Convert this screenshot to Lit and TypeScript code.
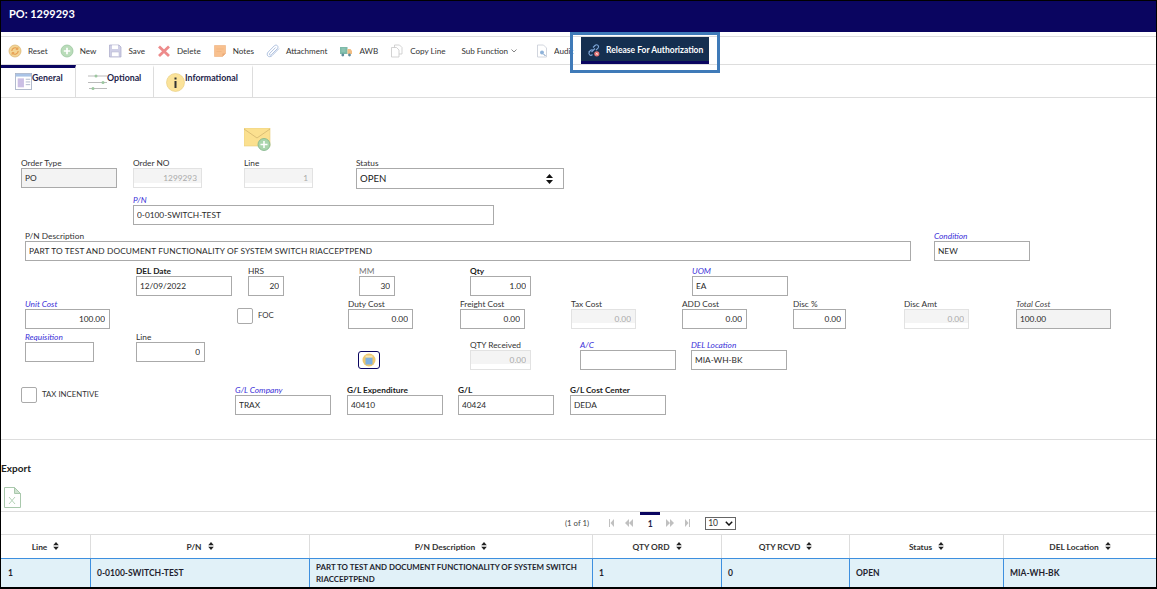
import { LitElement, html, css, svg } from 'lit';
import { customElement } from 'lit/decorators.js';

type Kind = 'plain' | 'bold' | 'link' | 'dim' | 'total';
interface Field {
  x: number;
  w: number;
  label?: string;
  kind?: Kind;
  value?: string;
  right?: boolean;
  disabled?: boolean;
  grey?: boolean;
  wide?: boolean;
  dy?: number;
  custom?: 'select' | 'check' | 'calc';
  text?: string;
}
interface Row {
  gap: number;
  fields: Field[];
}

const ROWS: Row[] = [
  { gap: 9, fields: [
    { x: 21, w: 96, label: 'Order Type', value: 'PO', grey: true },
    { x: 133, w: 69, label: 'Order NO', value: '1299293', right: true, disabled: true },
    { x: 244, w: 69, label: 'Line', value: '1', right: true, disabled: true },
    { x: 356, w: 208, label: 'Status', custom: 'select', value: 'OPEN' },
  ] },
  { gap: 7, fields: [
    { x: 133, w: 361, label: 'P/N', kind: 'link', value: '0-0100-SWITCH-TEST' },
  ] },
  { gap: 7, fields: [
    { x: 25, w: 886, label: 'P/N Description', wide: true, value: 'PART TO TEST AND DOCUMENT FUNCTIONALITY OF SYSTEM SWITCH RIACCEPTPEND' },
    { x: 934, w: 96, label: 'Condition', kind: 'link', value: 'NEW' },
  ] },
  { gap: 6, fields: [
    { x: 136, w: 96, label: 'DEL Date', kind: 'bold', value: '12/09/2022' },
    { x: 248, w: 36, label: 'HRS', value: '20', right: true },
    { x: 359, w: 36, label: 'MM', kind: 'dim', value: '30', right: true },
    { x: 470, w: 61, label: 'Qty', kind: 'bold', value: '1.00', right: true },
    { x: 692, w: 96, label: 'UOM', kind: 'link', value: 'EA' },
  ] },
  { gap: 4, fields: [
    { x: 25, w: 85, label: 'Unit Cost', kind: 'link', value: '100.00', right: true },
    { x: 237, w: 60, custom: 'check', text: 'FOC', dy: 8 },
    { x: 348, w: 65, label: 'Duty Cost', value: '0.00', right: true },
    { x: 460, w: 65, label: 'Freight Cost', value: '0.00', right: true },
    { x: 571, w: 65, label: 'Tax Cost', value: '0.00', right: true, disabled: true },
    { x: 682, w: 65, label: 'ADD Cost', value: '0.00', right: true },
    { x: 793, w: 53, label: 'Disc %', value: '0.00', right: true },
    { x: 904, w: 65, label: 'Disc Amt', value: '0.00', right: true, disabled: true },
    { x: 1016, w: 95, label: 'Total Cost', kind: 'total', value: '100.00', grey: true },
  ] },
  { gap: 4, fields: [
    { x: 25, w: 69, label: 'Requisition', kind: 'link', value: '' },
    { x: 136, w: 69, label: 'Line', value: '0', right: true },
    { x: 358, w: 22, custom: 'calc', dy: 18 },
    { x: 470, w: 61, label: 'QTY Received', value: '0.00', right: true, disabled: true, dy: 8 },
    { x: 580, w: 96, label: 'A/C', kind: 'link', value: '', dy: 8 },
    { x: 691, w: 96, label: 'DEL Location', kind: 'link', value: 'MIA-WH-BK', dy: 8 },
  ] },
  { gap: 16, fields: [
    { x: 21, w: 110, custom: 'check', text: 'TAX INCENTIVE', dy: 1 },
    { x: 235, w: 96, label: 'G/L Company', kind: 'link', value: 'TRAX' },
    { x: 347, w: 96, label: 'G/L Expenditure', kind: 'bold', value: '40410' },
    { x: 458, w: 96, label: 'G/L', kind: 'bold', value: '40424' },
    { x: 570, w: 96, label: 'G/L Cost Center', kind: 'bold', value: 'DEDA' },
  ] },
];

const COLUMNS = [
  { name: 'Line', w: 90, value: '1' },
  { name: 'P/N', w: 219, value: '0-0100-SWITCH-TEST' },
  { name: 'P/N Description', w: 283, value: 'PART TO TEST AND DOCUMENT FUNCTIONALITY OF SYSTEM SWITCH RIACCEPTPEND', tight: true },
  { name: 'QTY ORD', w: 129, value: '1' },
  { name: 'QTY RCVD', w: 128, value: '0' },
  { name: 'Status', w: 154, value: 'OPEN' },
  { name: 'DEL Location', w: 152, value: 'MIA-WH-BK' },
];

const ic = (body: unknown) => html`<svg class="ic" width="14" height="14" viewBox="0 0 14 14">${body}</svg>`;

const ICONS: Record<string, unknown> = {
  reset: ic(svg`<circle cx="7" cy="7" r="6" fill="#f3d595" stroke="#dcb877" stroke-width=".8"/>
    <path d="M3.8 7a3.2 3.2 0 0 1 5.6-2.1M10.2 7a3.2 3.2 0 0 1-5.6 2.1" fill="none" stroke="#e59a4c" stroke-width="1.1"/>
    <path d="M9.9 3.2v2.2H7.8M4.1 10.8V8.6h2.1" fill="none" stroke="#e59a4c" stroke-width=".9"/>`),
  new: ic(svg`<circle cx="7" cy="7" r="6" fill="#b9dcb9" stroke="#9cc79f" stroke-width=".8"/>
    <path d="M7 3.8v6.4M3.8 7h6.4" stroke="#fff" stroke-width="1.7"/>`),
  save: ic(svg`<path d="M1.5 1H11l2 2v10H1.5z" fill="#cfcfe6" stroke="#a9a9c8" stroke-width=".7"/>
    <rect x="4" y="1.3" width="6" height="3.7" fill="#fff"/>
    <rect x="3.5" y="8" width="7.5" height="4.7" fill="#fff" stroke="#b4b4d0" stroke-width=".5"/>`),
  delete: ic(svg`<path d="M2 2.5L12 12M12 2.5L2 12" stroke="#ed8b8b" stroke-width="2.8"/>`),
  notes: ic(svg`<path d="M1.5 1.5h11v8l-3 3h-8z" fill="#f8c08e" stroke="#efb07c" stroke-width=".6"/>
    <path d="M12.5 9.5h-3v3z" fill="#e9a877"/>
    <path d="M3.5 5h7M3.500 7.5h5" stroke="#efb07c" stroke-width=".6"/>`),
  attach: ic(svg`<path d="M13 4.500L6 11.700c-1.300 1.300-3.200 1.300-4.100.3-1-1-1-2.700.3-4L8.300 1.800c.9-.9 2.300-.9 3.100-.1.8.8.8 2.100-.1 3L5.300 10.800c-.5.5-1.200.5-1.600.1-.4-.4-.4-1.100.1-1.600L9.600 3.500" fill="none" stroke="#a8bcdc" stroke-width=".9"/>`),
  awb: ic(svg`<rect x="1" y="3" width="7.5" height="7" fill="#7dbaa8"/>
    <path d="M8.500 5h3L13 7v3H8.500z" fill="#f2bd83"/>
    <path d="M2.500 5h4M2.500 7h4" stroke="#a9d6c8" stroke-width=".7"/>
    <circle cx="3.8" cy="11" r="1.4" fill="#5f8a99"/><circle cx="10.500" cy="11" r="1.4" fill="#5f8a99"/>`),
  copy: ic(svg`<path d="M4.500 1h5L12 3.500V10H4.500z" fill="#fff" stroke="#c8c8c8" stroke-width=".8"/>
    <path d="M1.500 3.500h5L9 6v7H1.500z" fill="#fff" stroke="#c8c8c8" stroke-width=".8"/>`),
  audit: ic(svg`<path d="M2.500 1h6l3 3v9h-9z" fill="#fff" stroke="#c6ccd6" stroke-width=".8"/>
    <circle cx="7" cy="8.500" r="2" fill="#8fb3da"/><path d="M8.500 10l2 2" stroke="#6f93bc"/>`),
};

const TOOLS = [
  { icon: 'reset', label: 'Reset' },
  { icon: 'new', label: 'New' },
  { icon: 'save', label: 'Save' },
  { icon: 'delete', label: 'Delete' },
  { icon: 'notes', label: 'Notes' },
  { icon: 'attach', label: 'Attachment' },
  { icon: 'awb', label: 'AWB' },
  { icon: 'copy', label: 'Copy Line' },
];

const sortIcon = html`<svg class="sort" width="6" height="8" viewBox="0 0 7 10"><path d="M3.500 0L7 4H0zM0 6h7L3.500 10z" fill="#222"/></svg>`;

@customElement('app-root')
export class AppRoot extends LitElement {
  static styles = css`
    :host {
      display: block;
      width: 1157px;
      height: 589px;
      box-sizing: border-box;
      border: 1px solid #000;
      border-bottom-width: 2px;
      overflow: hidden;
      position: relative;
      background: #fff;
      font-family: Lato, "Liberation Sans", sans-serif;
      font-size: 8.3px;
      color: #222;
    }
    * { box-sizing: border-box; }
    .title {
      height: 31px;
      background: #0a0560;
      color: #fff;
      font-weight: 700;
      font-size: 11px;
      padding: 0 0 7px 8px;
      display: flex;
      align-items: center;
    }
    .toolbar {
      height: 29px;
      margin-top: 4px;
      border-top: 1px solid #ddd;
      border-bottom: 1px solid #ddd;
      padding-left: 7px;
      display: flex;
      align-items: center;
      gap: 12px;
      white-space: nowrap;
      font-size: 8.1px;
      color: #333;
    }
    .tool { display: flex; align-items: center; gap: 6px; }
    .ic { flex: none; display: block; }
    .chev { margin-left: -3px; }
    .sub { margin-left: 4px; }
    .audit { margin-left: 6px; gap: 5px; }
    .audit span { width: 20px; overflow: hidden; }
    .release {
      flex: none;
      width: 128px;
      height: 27px;
      margin-left: -5px;
      align-self: flex-end;
      background: #152f50;
      border-bottom: 3px solid #0a0560;
      color: #fff;
      font-weight: 700;
      font-size: 8.5px;
      display: flex;
      align-items: center;
      gap: 6px;
      padding: 2px 0 0 6px;
    }
    .release svg { flex: none; }
    .highlight {
      position: absolute;
      left: 569px;
      top: 31px;
      width: 150px;
      height: 41px;
      border: 3px solid #3f7ab8;
    }
    .tabs {
      height: 33px;
      border-bottom: 1px solid #ddd;
      display: flex;
      font-weight: 700;
      font-size: 8.8px;
      color: #24244a;
    }
    .tab {
      display: flex;
      padding-top: 4px;
      border-right: 1px solid #ddd;
      border-top: 3px solid transparent;
    }
    .tab svg { margin-top: 1px; }
    .tab.on { border-top-color: #0a0560; }
    .tab-general { width: 75px; padding-left: 14px; }
    .tab-optional { width: 78px; padding-left: 12px; }
    .tab-info { width: 99px; padding-left: 12px; }
    .form { padding-top: 30px; }
    .envelope { margin-left: 243px; height: 22px; }
    .row { display: flex; align-items: flex-start; }
    .field { flex: none; display: flex; flex-direction: column; }
    .label { height: 9px; line-height: 9px; white-space: nowrap; color: #333; }
    .label.bold { font-weight: 700; color: #222; }
    .label.link { font-style: italic; color: #3a2fd8; }
    .label.dim { color: #777; }
    .label.total { font-style: italic; color: #444; }
    input {
      width: 100%;
      height: 20px;
      border: 1px solid #aaa;
      padding: 0 4px 0 3px;
      font: inherit;
      color: #2a2a2a;
      background: #fff;
      outline: none;
    }
    input.right { text-align: right; }
    input.grey { background: #f3f3f3; }
    input.wide { letter-spacing: .12px; }
    input:disabled { border-color: #e2e2e2; color: #aaa; background: linear-gradient(#f4f4f4 75%, #fff 75%); }
    .select {
      height: 21px;
      border: 1px solid #aaa;
      padding: 0 10px 0 3px;
      display: flex;
      align-items: center;
      justify-content: space-between;
      font-size: 9.6px;
      color: #222;
    }
    .check { display: flex; align-items: center; gap: 5px; white-space: nowrap; color: #333; font-size: 7.8px; }
    .check span:last-child { margin-top: -2px; }
    .box { width: 16px; height: 16px; border: 1px solid #aaa; border-radius: 2px; background: #fff; }
    .calc {
      width: 22px;
      height: 18px;
      border: 1px solid #0a0560;
      border-radius: 3px;
      display: flex;
      align-items: center;
      justify-content: center;
    }
    .divider { border-top: 1px solid #ddd; margin-top: 24px; }
    .export { font-weight: 700; font-size: 10px; line-height: 12px; padding-top: 22px; color: #222; }
    .xls { display: block; margin: 13px 0 0 3px; }
    .pager {
      margin-top: 3px;
      height: 23px;
      border-top: 1px solid #ddd;
      display: flex;
      align-items: center;
      padding-left: 564px;
      color: #444;
      font-size: 7.8px;
    }
    .nav { display: flex; align-items: center; gap: 11px; }
    .nav-back { margin: 0 7px 0 20px; }
    .nav-next { margin: 0 15px 0 6px; }
    .current {
      width: 20px;
      height: 22px;
      padding-bottom: 2px;
      display: flex;
      align-items: center;
      justify-content: center;
      font-weight: 700;
      font-size: 8.5px;
      color: #24244a;
      border-top: 3px solid #0a0560;
    }
    .per {
      width: 31px;
      height: 13px;
      border: 1px solid #666;
      display: flex;
      align-items: center;
      justify-content: space-between;
      padding: 0 2px;
      font-size: 8.5px;
      color: #333;
    }
    .grid { display: flex; flex-direction: column; }
    .tr { display: flex; }
    .th {
      height: 24px;
      padding-top: 1px;
      border-top: 1px solid #ddd;
      border-right: 1px solid #ddd;
      display: flex;
      align-items: center;
      justify-content: center;
      gap: 6px;
      font-weight: 700;
      color: #333;
      font-size: 8.4px;
    }
    .th:last-child, .td:last-child { border-right: none; }
    .sort { margin-top: -3px; }
    .td {
      height: 30px;
      background: #e1f1f8;
      border-top: 1px solid #3d8fdf;
      border-bottom: 1px solid #3d8fdf;
      border-right: 1px solid #3d8fdf;
      padding: 0 6px;
      display: flex;
      align-items: center;
      font-weight: 700;
      line-height: 12px;
      color: #1f1f2e;
      font-size: 8.5px;
    }
    .td:first-child { padding-left: 7px; }
    .td.tight { font-size: 7.9px; }
  `;

  private renderField(f: Field, left: number) {
    const gap = f.x - left;
    const place = `margin-left:${gap}px;margin-top:${f.dy ?? 0}px;width:${f.w}px`;
    if (f.custom === 'check') {
      return html`<div class="check" style=${place}><span class="box"></span><span>${f.text}</span></div>`;
    }
    if (f.custom === 'calc') {
      return html`<div class="calc" style=${place}>
        <svg width="14" height="14" viewBox="0 0 14 14">
          <circle cx="7" cy="7" r="6.5" fill="#eec76e"/>
          <rect x="3.5" y="4.5" width="7" height="7" fill="#7fb0e0"/>
          <rect x="3.5" y="2.5" width="7" height="2" fill="#f6e6b4"/>
        </svg>
      </div>`;
    }
    return html`<div class="field" style=${place}>
      <span class="label ${f.kind ?? 'plain'}">${f.label}</span>
      ${f.custom === 'select'
        ? html`<div class="select">${f.value}
            <svg width="7" height="10" viewBox="0 0 7 10"><path d="M3.500 0L7 4H0zM0 6h7L3.500 10z" fill="#111"/></svg>
          </div>`
        : html`<input class="${f.right ? 'right' : ''} ${f.grey ? 'grey' : ''} ${f.wide ? 'wide' : ''}" .value=${f.value ?? ''} ?disabled=${f.disabled} readonly />`}
    </div>`;
  }

  private renderRow(row: Row) {
    // x in the data is page position, the frame border takes 1px
    let left = 1;
    return html`<div class="row" style="margin-top:${row.gap}px">
      ${row.fields.map((f) => {
        const out = this.renderField(f, left);
        left = f.x + f.w;
        return out;
      })}
    </div>`;
  }

  render() {
    return html`
      <div class="title">PO: 1299293</div>
      <div class="toolbar">
        ${TOOLS.map((t) => html`<div class="tool">${ICONS[t.icon]}<span>${t.label}</span></div>`)}
        <div class="tool sub">
          <span>Sub Function</span>
          <svg class="chev" width="6" height="4" viewBox="0 0 6 4"><path d="M.5.5L3 3 5.5.5" fill="none" stroke="#666" stroke-width=".8"/></svg>
        </div>
        <div class="tool audit">${ICONS.audit}<span>Audit</span></div>
        <div class="release">
          <svg width="13" height="14" viewBox="0 0 13 14">
            <path d="M1.500 9.500l2-2c.8-.8 2-.8 2.700-.1M5.500 11.500c-.8.8-2.200.9-3 .1-.7-.7-.7-1.900 0-2.600M6 4.500l2-2c.8-.8 2.200-.8 3-.1.7.8.7 2 0 2.800L9 7.200" fill="none" stroke="#7ea6d8" stroke-width="1.1"/>
            <path d="M4.500 9L8 5.500" stroke="#7ea6d8" stroke-width="1.1"/>
            <circle cx="9.800" cy="10.800" r="2.6" fill="#e57575"/>
            <path d="M8.800 9.800l2 2M10.800 9.800l-2 2" stroke="#fff" stroke-width=".7"/>
          </svg>
          Release For Authorization
        </div>
      </div>
      <div class="highlight"></div>
      <div class="tabs">
        <div class="tab tab-general on">
          <svg width="17" height="17" viewBox="0 0 19 19"><rect x=".5" y=".5" width="18" height="18" fill="#fff" stroke="#aab4c8"/><rect x="1" y="1" width="17" height="3" fill="#a9c3e6"/><rect x="3" y="6" width="7" height="10" fill="#cbbfe4"/><path d="M12 7h5M12 10h5M12 13h5" stroke="#aab4c8"/></svg>
          <span>General</span>
        </div>
        <div class="tab tab-optional">
          <svg width="19" height="18" viewBox="0 0 19 18"><path d="M0 3h19M0 9.500h19M1 15.500h18" stroke="#aaa" stroke-width=".8"/><circle cx="8" cy="3" r="1.5" fill="#9cc79f"/><circle cx="15" cy="9.500" r="1.5" fill="#9cc79f"/><circle cx="5" cy="15.500" r="1.5" fill="#9cc79f"/></svg>
          <span>Optional</span>
        </div>
        <div class="tab tab-info">
          <svg width="19" height="19" viewBox="0 0 19 19"><circle cx="9.5" cy="9.5" r="9" fill="#fbe39a" stroke="#e6c977" stroke-width=".6"/><rect x="8.500" y="8" width="2" height="7" fill="#333"/><rect x="8.500" y="4.500" width="2" height="2" fill="#333"/></svg>
          <span>Informational</span>
        </div>
      </div>
      <div class="form">
        <div class="envelope">
          <svg width="27" height="23" viewBox="0 0 27 23">
            <rect x="0" y="0" width="26" height="18" fill="#fbe08f" stroke="#e8cc7c" stroke-width=".6"/>
            <path d="M0 1l13 9L26 1" fill="none" stroke="#cdb06a" stroke-width=".7"/>
            <circle cx="20" cy="16.500" r="6" fill="#a9d5ac" stroke="#7fb288" stroke-width=".8"/>
            <path d="M20 13v7M16.500 16.500h7" stroke="#fff" stroke-width="1.5"/>
          </svg>
        </div>
        ${ROWS.map((r) => this.renderRow(r))}
      </div>
      <div class="divider"></div>
      <div class="export">Export</div>
      <svg class="xls" width="17" height="21" viewBox="0 0 17 21">
        <path d="M.5.5h10l6 6v14H.5z" fill="#fff" stroke="#a9c8ac"/>
        <path d="M10.500.5v6h6z" fill="#cfe3d0" stroke="#a9c8ac"/>
        <path d="M5 10l6 7M11 10l-6 7" stroke="#b5d3b8"/>
      </svg>
      <div class="pager">
        <span>(1 of 1)</span>
        <span class="nav nav-back">
          <svg width="5" height="8" viewBox="0 0 5 8"><path d="M0 0v8h1V0zM5 0v8L1.500 4z" fill="#c0c0c0"/></svg>
          <svg width="8" height="8" viewBox="0 0 8 8"><path d="M4 0v8L0 4zM8 0v8L4 4z" fill="#c0c0c0"/></svg>
        </span>
        <span class="current">1</span>
        <span class="nav nav-next">
          <svg width="8" height="8" viewBox="0 0 8 8"><path d="M0 0v8l4-4zM4 0v8l4-4z" fill="#c0c0c0"/></svg>
          <svg width="5" height="8" viewBox="0 0 5 8"><path d="M0 0v8l3.500-4zM4 0v8h1V0z" fill="#c0c0c0"/></svg>
        </span>
        <span class="per">10
          <svg width="8" height="5" viewBox="0 0 8 5"><path d="M.8.8L4 4 7.200.8" fill="none" stroke="#111" stroke-width="1.5"/></svg>
        </span>
      </div>
      <div class="grid">
        <div class="tr">
          ${COLUMNS.map((c) => html`<div class="th" style="width:${c.w}px">${c.name}${sortIcon}</div>`)}
        </div>
        <div class="tr">
          ${COLUMNS.map((c) => html`<div class="td ${c.tight ? 'tight' : ''}" style="width:${c.w}px">${c.value}</div>`)}
        </div>
      </div>
    `;
  }
}
